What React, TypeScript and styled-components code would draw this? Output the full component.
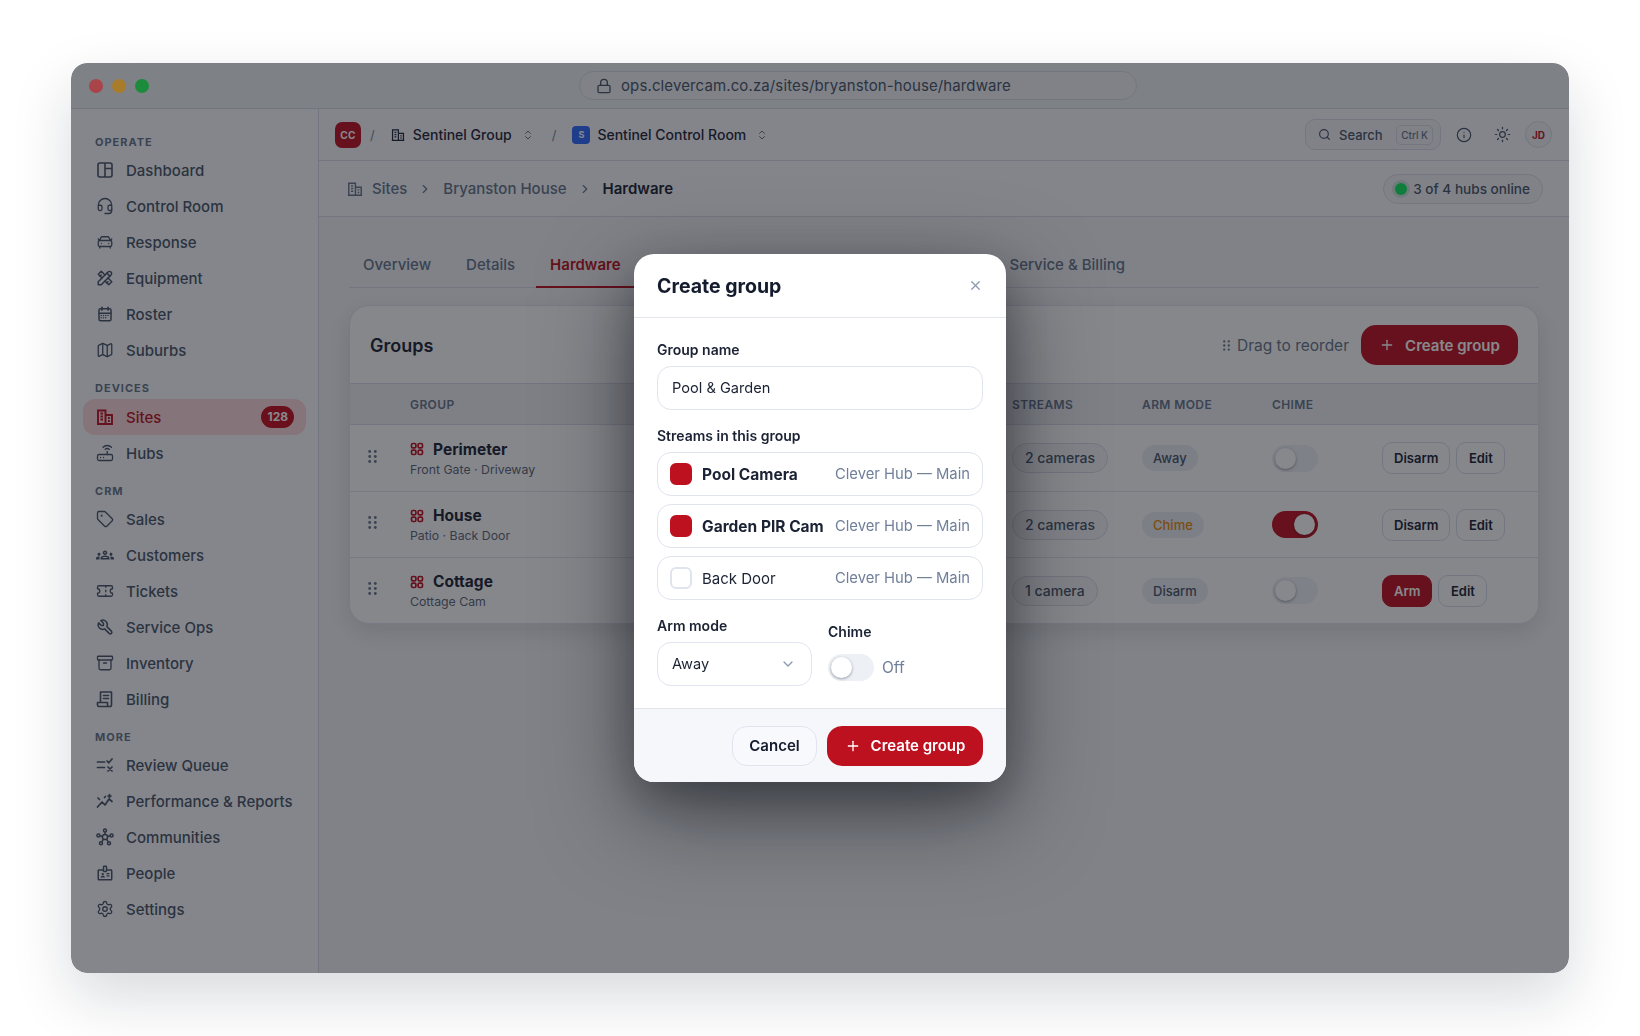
import React from 'react'
import styled, { createGlobalStyle } from 'styled-components'
import {
  Archive,
  CarFront,
  ChevronDown,
  ChevronRight,
  ChevronsUpDown,
  Headset,
  Info,
  Lock,
  Map as MapIcon,
  Plus,
  Router,
  Search,
  Settings,
  Sun,
  Tag,
  Ticket,
  X,
} from 'lucide-react'
import { TbCalendarMonth, TbTool, TbTools } from 'react-icons/tb'
import { MdOutlineBadge, MdOutlineGroups } from 'react-icons/md'

const FONT = `Inter, "Liberation Sans", sans-serif`

const GlobalStyle = createGlobalStyle`
  html, body {
    margin: 0;
    padding: 0;
    background: #ffffff;
    font-family: ${FONT};
  }
  * {
    box-sizing: border-box;
  }
`

const Page = styled.div`
  width: 1640px;
  height: 1036px;
  padding: 63px 71px 62px;
  overflow: hidden;
`

const BrowserWindow = styled.div`
  position: relative;
  width: 1498px;
  height: 910px;
  display: flex;
  flex-direction: column;
  border-radius: 16px;
  background: #f7f8fa;
  box-shadow: 0 24px 60px rgba(15, 23, 42, 0.16);
  overflow: hidden;
`

const TitleBar = styled.div`
  height: 46px;
  flex: none;
  display: flex;
  align-items: center;
  padding-left: 18px;
  background: #edf0f3;
  border-bottom: 1px solid #d5dbe6;
`

const Lights = styled.div`
  position: relative;
  z-index: 3;
  display: flex;
  gap: 9px;
`

const Light = styled.span<{ $color: string }>`
  width: 14px;
  height: 14px;
  border-radius: 50%;
  background: ${({ $color }) => $color};
`

const AddressBar = styled.div`
  width: 558px;
  height: 29px;
  margin-left: 430px;
  display: flex;
  align-items: center;
  gap: 9px;
  padding-left: 16px;
  border: 1px solid #d5dbe6;
  border-radius: 15px;
  background: #f0f2f6;
  color: #475569;
  font-size: 15px;
  letter-spacing: 0.12px;
`

const Body = styled.div`
  flex: 1;
  min-height: 0;
  display: flex;
`

const Sidebar = styled.aside`
  width: 248px;
  flex: none;
  padding: 25px 12px 0;
  background: #fafbfd;
  border-right: 1px solid #d5dbe6;
`

const NavLabel = styled.div<{ $top: number; $bottom: number }>`
  height: 16px;
  margin: ${({ $top }) => $top}px 0 ${({ $bottom }) => $bottom}px;
  padding-left: 12px;
  color: #64748b;
  font-size: 11px;
  font-weight: 700;
  line-height: 16px;
  letter-spacing: 1px;
`

const NavItem = styled.div<{ $active?: boolean }>`
  height: 36px;
  display: flex;
  align-items: center;
  gap: 12px;
  padding: 0 13px 0 13px;
  border-radius: 12px;
  background: ${({ $active }) => ($active ? '#fad6da' : 'transparent')};
  color: ${({ $active }) => ($active ? '#bd1120' : '#475569')};
  font-size: 15px;
  font-weight: 500;
  svg {
    flex: none;
    width: 18px;
    height: 18px;
  }
`

const NavBadge = styled.span`
  margin-left: auto;
  margin-right: -1px;
  padding: 0 6px;
  height: 22px;
  border-radius: 11px;
  background: #c50f20;
  color: #ffffff;
  font-size: 12px;
  font-weight: 700;
  line-height: 22px;
`

const Main = styled.main`
  flex: 1;
  min-width: 0;
  display: flex;
  flex-direction: column;
  background: #f1f3f5;
`

const TopBar = styled.div`
  height: 52px;
  flex: none;
  display: flex;
  align-items: center;
  padding: 0 17px 0 16px;
  background: #f7f8fa;
  border-bottom: 1px solid #d5dbe6;
`

const OrgLogo = styled.span`
  width: 26px;
  height: 26px;
  display: flex;
  align-items: center;
  justify-content: center;
  border-radius: 7px;
  background: #bd1120;
  color: #ffffff;
  font-size: 10px;
  font-weight: 700;
  letter-spacing: 0.3px;
`

const Slash = styled.span<{ $second?: boolean }>`
  margin: 0 16px 0 ${({ $second }) => ($second ? '18px' : '9px')};
  color: #7b879b;
  font-size: 13px;
`

const ProjectLogo = styled.span`
  width: 18px;
  height: 18px;
  margin-right: -1px;
  display: flex;
  align-items: center;
  justify-content: center;
  border-radius: 4px;
  background: #2d6aff;
  color: #ffffff;
  font-size: 9px;
  font-weight: 700;
`

const Switcher = styled.div`
  display: flex;
  align-items: center;
  gap: 8px;
  color: #1e2538;
  font-size: 14px;
  font-weight: 500;
  svg {
    flex: none;
  }
`

const SwitcherText = styled.span`
  margin-right: 2px;
`

const TopActions = styled.div`
  margin-left: auto;
  display: flex;
  align-items: center;
`

const SearchBox = styled.div`
  width: 136px;
  height: 31px;
  display: flex;
  align-items: center;
  padding: 0 7px 0 12px;
  border: 1px solid #d5dbe6;
  border-radius: 10px;
  background: #f1f3f7;
  color: #475569;
  font-size: 13px;
  font-weight: 500;
  gap: 8px;
`

const Kbd = styled.span`
  margin-left: auto;
  flex: none;
  height: 20px;
  padding: 0 4px;
  border: 1px solid #d5dbe6;
  border-radius: 5px;
  color: #64748b;
  font-size: 10px;
  font-weight: 500;
  line-height: 18px;
  white-space: nowrap;
`

const IconButton = styled.span<{ $first?: boolean }>`
  width: 38px;
  margin-left: ${({ $first }) => ($first ? '4px' : '0')};
  display: flex;
  justify-content: center;
  color: #475569;
`

const Avatar = styled.span`
  width: 27px;
  height: 27px;
  display: flex;
  align-items: center;
  justify-content: center;
  margin-left: 4px;
  border: 1px solid #d5dbe6;
  border-radius: 50%;
  background: #f1f3f7;
  color: #bd1120;
  font-size: 10px;
  font-weight: 700;
`

const Crumbs = styled.div`
  height: 56px;
  flex: none;
  display: flex;
  align-items: center;
  padding: 0 26px 0 28px;
  background: #f7f8fa;
  border-bottom: 1px solid #d5dbe6;
  color: #64748b;
  font-size: 15px;
  font-weight: 500;
  svg {
    flex: none;
  }
`

const CrumbIcon = styled.span`
  display: flex;
  margin-right: 9px;
`

const CrumbSep = styled.span`
  display: flex;
  margin: 0 11px;
`

const CrumbCurrent = styled.span`
  color: #1a2233;
  font-weight: 600;
`

const HubPill = styled.div`
  margin-left: auto;
  height: 30px;
  display: flex;
  align-items: center;
  gap: 6px;
  padding: 0 12px 0 11px;
  border: 1px solid #d5dbe6;
  border-radius: 15px;
  background: #f1f3f7;
  color: #475569;
  font-size: 13.6px;
  font-weight: 500;
`

const HubDot = styled.span`
  width: 12px;
  height: 12px;
  border-radius: 50%;
  background: #0fe85f;
  box-shadow: 0 0 0 3px #cfe5da;
`

const Content = styled.div`
  flex: 1;
  padding: 30px 30px 0;
`

const Tabs = styled.div`
  height: 41px;
  display: flex;
  gap: 7px;
  border-bottom: 1px solid #d5dbe6;
`

const Tab = styled.div<{ $active?: boolean; $offset?: number }>`
  height: 41px;
  margin-left: ${({ $offset }) => $offset ?? 0}px;
  padding: 0 14px 5px;
  display: flex;
  align-items: center;
  border-bottom: 2px solid ${({ $active }) => ($active ? '#bd1120' : 'transparent')};
  color: ${({ $active }) => ($active ? '#bd1120' : '#64748b')};
  font-size: 15px;
  font-weight: ${({ $active }) => ($active ? 600 : 500)};
`

const Card = styled.section`
  margin-top: 17px;
  width: 1190px;
  border: 1px solid #dfe3ec;
  border-radius: 20px;
  background: #fcfdfd;
  box-shadow: 0 8px 24px rgba(15, 23, 42, 0.12);
  overflow: hidden;
`

const CardHeader = styled.div`
  height: 77px;
  display: flex;
  align-items: center;
  padding: 1px 20px 0 20px;
`

const CardTitle = styled.h2`
  margin: 0;
  color: #1a2233;
  font-size: 18px;
  font-weight: 600;
`

const Hint = styled.div`
  margin-left: auto;
  display: flex;
  align-items: center;
  gap: 7px;
  color: #64748b;
  font-size: 15.5px;
`

const PrimaryButton = styled.button<{ $w: number }>`
  width: ${({ $w }) => $w}px;
  height: 40px;
  display: flex;
  align-items: center;
  justify-content: center;
  gap: 10px;
  border: none;
  border-radius: 15px;
  background: #bd1120;
  color: #ffffff;
  font-family: ${FONT};
  font-size: 15px;
  font-weight: 600;
`

const HeaderButton = styled(PrimaryButton)`
  margin-left: 12px;
`

const TableGrid = styled.div`
  display: grid;
  grid-template-columns: 60px 602px 130px 130px 110px 1fr;
  align-items: center;
`

const TableHead = styled(TableGrid)`
  height: 42px;
  background: #eceef2;
  border-top: 1px solid #d5dbe6;
  border-bottom: 1px solid #d5dbe6;
  color: #64748b;
  font-size: 12px;
  font-weight: 600;
  letter-spacing: 0.4px;
`

const TableRow = styled(TableGrid)`
  height: 66px;
  & + & {
    border-top: 1px solid #dfe3ec;
  }
`

const GripCell = styled.div`
  display: flex;
  padding: 0 0 4px 18px;
  color: #64748b;
`

const GroupName = styled.div`
  display: flex;
  align-items: center;
  gap: 9px;
  color: #1a2233;
  font-size: 15.5px;
  font-weight: 700;
  svg {
    color: #bd1120;
  }
`

const GroupStreams = styled.div`
  margin-top: 3px;
  color: #5b6579;
  font-size: 12.3px;
`

const CountPill = styled.span`
  display: inline-block;
  height: 30px;
  padding: 0 12px;
  border: 1px solid #d5dbe6;
  border-radius: 15px;
  background: #f4f5f8;
  color: #475569;
  font-size: 14px;
  font-weight: 500;
  line-height: 28px;
`

const ModePill = styled.span<{ $amber?: boolean }>`
  display: inline-block;
  height: 26px;
  padding: 0 11px;
  border-radius: 13px;
  background: #e9ecf2;
  color: ${({ $amber }) => ($amber ? '#e88a05' : '#475569')};
  font-size: 13px;
  font-weight: 500;
  line-height: 26px;
`

const Toggle = styled.span<{ $on?: boolean }>`
  position: relative;
  display: block;
  width: 46px;
  height: 27px;
  border-radius: 14px;
  background: ${({ $on }) => ($on ? '#bd1120' : '#edf0f5')};
  &::after {
    content: '';
    position: absolute;
    top: 3px;
    left: ${({ $on }) => ($on ? '22px' : '3px')};
    width: 21px;
    height: 21px;
    border-radius: 50%;
    background: #ffffff;
    box-shadow: 0 1px 3px rgba(15, 23, 42, 0.4);
  }
`

const Actions = styled.div`
  display: flex;
  gap: 6px;
`

const RowButton = styled.button<{ $primary?: boolean }>`
  height: 32px;
  min-width: 49px;
  padding: 0 11px;
  border: 1px solid ${({ $primary }) => ($primary ? '#bd1120' : '#d5dbe6')};
  border-radius: 10px;
  background: ${({ $primary }) => ($primary ? '#bd1120' : '#fcfdfd')};
  color: ${({ $primary }) => ($primary ? '#ffffff' : '#1a2233')};
  font-family: ${FONT};
  font-size: 13px;
  font-weight: 600;
`

const Overlay = styled.div`
  position: absolute;
  inset: 0;
  z-index: 2;
  display: flex;
  align-items: center;
  justify-content: center;
  background: rgba(15, 18, 25, 0.5);
  backdrop-filter: blur(0.5px);
`

const Modal = styled.div`
  width: 372px;
  height: 528px;
  display: flex;
  flex-direction: column;
  border-radius: 20px;
  background: #ffffff;
  box-shadow: 0 30px 90px rgba(5, 8, 15, 0.5), 0 16px 40px rgba(5, 8, 15, 0.22);
  overflow: hidden;
`

const ModalHeader = styled.div`
  height: 64px;
  flex: none;
  display: flex;
  align-items: center;
  justify-content: space-between;
  padding: 0 23px;
  border-bottom: 1px solid #e2e5ee;
  color: #8a9ab2;
`

const ModalTitle = styled.h3`
  margin: 0;
  color: #141b2d;
  font-size: 19.5px;
  font-weight: 700;
`

const ModalBody = styled.div`
  flex: 1;
  padding: 23px 23px 0;
`

const FieldLabel = styled.div`
  height: 18px;
  color: #1a2233;
  font-size: 14px;
  font-weight: 600;
  line-height: 18px;
`

const TextInput = styled.div`
  height: 44px;
  margin: 7px 0 17px;
  display: flex;
  align-items: center;
  padding: 0 14px;
  border: 1px solid #e0e4ee;
  border-radius: 14px;
  color: #1a2233;
  font-size: 14.6px;
`

const StreamList = styled.div`
  display: flex;
  flex-direction: column;
  gap: 8px;
  margin-top: 7px;
`

const StreamRow = styled.div`
  height: 44px;
  display: flex;
  align-items: center;
  padding: 0 12px;
  border: 1px solid #e0e4ee;
  border-radius: 14px;
`

const Check = styled.span<{ $on?: boolean }>`
  width: 22px;
  height: 22px;
  flex: none;
  margin-right: 10px;
  border: 2px solid ${({ $on }) => ($on ? '#bd1120' : '#e0e4ee')};
  border-radius: 6px;
  background: ${({ $on }) => ($on ? '#bd1120' : '#ffffff')};
`

const StreamName = styled.span<{ $on?: boolean }>`
  color: #1a2233;
  font-size: ${({ $on }) => ($on ? '15.5px' : '15px')};
  font-weight: ${({ $on }) => ($on ? 700 : 400)};
  white-space: nowrap;
`

const StreamHub = styled.span`
  margin-left: auto;
  color: #71809a;
  font-size: 14.8px;
  white-space: nowrap;
`

const OptionsGrid = styled.div`
  display: grid;
  grid-template-columns: 155px 1fr;
  column-gap: 16px;
  align-items: center;
  margin-top: 17px;
`

const SelectBox = styled.div`
  height: 44px;
  margin-top: 7px;
  display: flex;
  align-items: center;
  justify-content: space-between;
  padding: 0 15px 0 14px;
  border: 1px solid #e0e4ee;
  border-radius: 14px;
  color: #1a2233;
  font-size: 14.6px;
  svg {
    color: #8a9ab2;
  }
`

const ChimeRow = styled.div`
  display: flex;
  align-items: center;
  gap: 8px;
  margin-top: 13px;
  color: #71809a;
  font-size: 15.5px;
`

const ModalFooter = styled.div`
  height: 74px;
  flex: none;
  display: flex;
  align-items: center;
  justify-content: flex-end;
  gap: 10px;
  padding: 0 23px;
  background: #f6f7fb;
  border-top: 1px solid #e2e5ee;
`

const CancelButton = styled.button`
  width: 85px;
  height: 40px;
  border: 1px solid #e0e4ee;
  border-radius: 15px;
  background: #f8f9fc;
  color: #141b2d;
  font-family: ${FONT};
  font-size: 15px;
  font-weight: 600;
`

// panel icon for the dashboard entry
const PanelIcon = () => (
  <svg viewBox="0 0 18 18" fill="none" stroke="currentColor" strokeWidth="1.6">
    <rect x="2" y="2" width="14" height="14" rx="2" />
    <path d="M9 2v14M9 7.5h7" />
  </svg>
)

const QueueIcon = () => (
  <svg viewBox="0 0 18 18" fill="none" stroke="currentColor" strokeWidth="1.7" strokeLinecap="round" strokeLinejoin="round">
    <path d="M1.5 6h7M1.5 11.5h7M11 5l1.8 1.8L16 3M12 11l4 4M16 11l-4 4" />
  </svg>
)

const PerfIcon = () => (
  <svg viewBox="0 0 18 18" fill="none" stroke="currentColor" strokeWidth="1.7" strokeLinecap="round" strokeLinejoin="round">
    <path d="M1.5 15l4.5-5 3 3 4-6 3 2.5M2 6l1.5 1.5M8.5 5.5l1-1M13.5 2.5v3M12 4h3" />
  </svg>
)

const BillingIcon = () => (
  <svg viewBox="0 0 18 18" fill="none" stroke="currentColor" strokeWidth="1.6" strokeLinecap="round" strokeLinejoin="round">
    <path d="M4.5 12.5V2h11v13a1.5 1.5 0 0 1-1.5 1.5H3A1.5 1.5 0 0 1 1.5 15v-2.5h10V15a1.5 1.5 0 0 0 1.5 1.5" />
    <path d="M7.5 5.5h5M7.5 8.5h5" />
  </svg>
)

const CommunitiesIcon = () => (
  <svg viewBox="0 0 18 18" fill="none" stroke="currentColor" strokeWidth="1.5">
    <circle cx="9" cy="9" r="2.6" />
    <circle cx="9" cy="2.4" r="1.5" />
    <circle cx="2.4" cy="7.4" r="1.5" />
    <circle cx="15.6" cy="7.4" r="1.5" />
    <circle cx="5" cy="15.2" r="1.5" />
    <circle cx="13" cy="15.2" r="1.5" />
    <path d="M9 3.9v2.5M3.9 7.8l2.6.6M14.1 7.8l-2.6.6M5.8 13.9l1.7-2.8M12.2 13.9l-1.7-2.8" />
  </svg>
)

// tall block with windows and a lower wing, used for sites
const SitesIcon = ({ size, stroke = 1.6 }: { size?: number; stroke?: number }) => (
  <svg width={size} height={size} viewBox="0 0 18 18" fill="none" stroke="currentColor" strokeWidth={stroke}>
    <path d="M2 16V2.5h7.5V16M9.5 7H16v9M1 16h16" />
    <path d="M4.5 5.5h2.5M4.5 8.5h2.5M4.5 11.5h2.5M12 10h1.8M12 13h1.8" />
  </svg>
)

const GroupGlyph = () => (
  <svg width="14" height="14" viewBox="0 0 14 14" fill="none" stroke="currentColor" strokeWidth="1.7">
    <rect x="1.5" y="1.5" width="4.4" height="4.4" rx="1.4" />
    <rect x="8.1" y="1.5" width="4.4" height="4.4" rx="1.4" />
    <rect x="1.5" y="8.1" width="4.4" height="4.4" rx="1.4" />
    <rect x="8.1" y="8.1" width="4.4" height="4.4" rx="1.4" />
  </svg>
)

const Grip = ({ w, h, r }: { w: number; h: number; r: number }) => (
  <svg width={w} height={h} viewBox="0 0 8 12" fill="currentColor">
    {[1.4, 6.6].map((x) => [1.4, 6, 10.6].map((y) => <circle key={`${x}-${y}`} cx={x} cy={y} r={r} />))}
  </svg>
)

const NAV = [
  {
    label: 'OPERATE',
    top: 0,
    bottom: 2,
    items: [
      { name: 'Dashboard', icon: <PanelIcon /> },
      { name: 'Control Room', icon: <Headset strokeWidth={1.75} /> },
      { name: 'Response', icon: <CarFront strokeWidth={1.75} /> },
      { name: 'Equipment', icon: <TbTools /> },
      { name: 'Roster', icon: <TbCalendarMonth /> },
      { name: 'Suburbs', icon: <MapIcon strokeWidth={1.75} /> },
    ],
  },
  {
    label: 'DEVICES',
    top: 12,
    bottom: 3,
    items: [
      { name: 'Sites', icon: <SitesIcon stroke={1.9} />, active: true, badge: '128' },
      { name: 'Hubs', icon: <Router strokeWidth={1.75} /> },
    ],
  },
  {
    label: 'CRM',
    top: 12,
    bottom: 2,
    items: [
      { name: 'Sales', icon: <Tag strokeWidth={1.75} /> },
      { name: 'Customers', icon: <MdOutlineGroups /> },
      { name: 'Tickets', icon: <Ticket strokeWidth={1.75} /> },
      { name: 'Service Ops', icon: <TbTool /> },
      { name: 'Inventory', icon: <Archive strokeWidth={1.75} /> },
      { name: 'Billing', icon: <BillingIcon /> },
    ],
  },
  {
    label: 'MORE',
    top: 12,
    bottom: 2,
    items: [
      { name: 'Review Queue', icon: <QueueIcon /> },
      { name: 'Performance & Reports', icon: <PerfIcon /> },
      { name: 'Communities', icon: <CommunitiesIcon /> },
      { name: 'People', icon: <MdOutlineBadge /> },
      { name: 'Settings', icon: <Settings strokeWidth={1.75} /> },
    ],
  },
]

const GROUPS = [
  { name: 'Perimeter', streams: 'Front Gate · Driveway', count: '2 cameras', mode: 'Away', chime: false, action: 'Disarm' },
  { name: 'House', streams: 'Patio · Back Door', count: '2 cameras', mode: 'Chime', chime: true, action: 'Disarm' },
  { name: 'Cottage', streams: 'Cottage Cam', count: '1 camera', mode: 'Disarm', chime: false, action: 'Arm' },
]

const STREAMS = [
  { name: 'Pool Camera', on: true },
  { name: 'Garden PIR Cam', on: true },
  { name: 'Back Door', on: false },
]

export default function App() {
  return (
    <>
      <GlobalStyle />
      <Page>
        <BrowserWindow>
          <TitleBar>
            <Lights>
              <Light $color="#a8444a" />
              <Light $color="#a87c2a" />
              <Light $color="#1c8c3c" />
            </Lights>
            <AddressBar>
              <Lock size={16} strokeWidth={2} />
              ops.clevercam.co.za/sites/bryanston-house/hardware
            </AddressBar>
          </TitleBar>
          <Body>
            <Sidebar>
              {NAV.map((section) => (
                <React.Fragment key={section.label}>
                  <NavLabel $top={section.top} $bottom={section.bottom}>
                    {section.label}
                  </NavLabel>
                  {section.items.map((item: any) => (
                    <NavItem key={item.name} $active={item.active}>
                      {item.icon}
                      {item.name}
                      {item.badge && <NavBadge>{item.badge}</NavBadge>}
                    </NavItem>
                  ))}
                </React.Fragment>
              ))}
            </Sidebar>
            <Main>
              <TopBar>
                <OrgLogo>CC</OrgLogo>
                <Slash>/</Slash>
                <Switcher>
                  <SitesIcon size={14} />
                  <SwitcherText>Sentinel Group</SwitcherText>
                  <ChevronsUpDown size={12} color="#64748b" />
                </Switcher>
                <Slash $second>/</Slash>
                <Switcher>
                  <ProjectLogo>S</ProjectLogo>
                  <SwitcherText>Sentinel Control Room</SwitcherText>
                  <ChevronsUpDown size={12} color="#64748b" />
                </Switcher>
                <TopActions>
                  <SearchBox>
                    <Search size={13} strokeWidth={2.2} />
                    Search
                    <Kbd>Ctrl K</Kbd>
                  </SearchBox>
                  <IconButton $first>
                    <Info size={16} strokeWidth={1.75} />
                  </IconButton>
                  <IconButton>
                    <Sun size={17} strokeWidth={1.75} />
                  </IconButton>
                  <Avatar>JD</Avatar>
                </TopActions>
              </TopBar>
              <Crumbs>
                <CrumbIcon>
                  <SitesIcon size={16} />
                </CrumbIcon>
                Sites
                <CrumbSep>
                  <ChevronRight size={14} />
                </CrumbSep>
                Bryanston House
                <CrumbSep>
                  <ChevronRight size={14} />
                </CrumbSep>
                <CrumbCurrent>Hardware</CrumbCurrent>
                <HubPill>
                  <HubDot />
                  3 of 4 hubs online
                </HubPill>
              </Crumbs>
              <Content>
                <Tabs>
                  <Tab>Overview</Tab>
                  <Tab>Details</Tab>
                  <Tab $active>Hardware</Tab>
                  <Tab $offset={354}>Service &amp; Billing</Tab>
                </Tabs>
                <Card>
                  <CardHeader>
                    <CardTitle>Groups</CardTitle>
                    <Hint>
                      <Grip w={7} h={11} r={1.3} />
                      Drag to reorder
                    </Hint>
                    <HeaderButton $w={157}>
                      <Plus size={16} />
                      Create group
                    </HeaderButton>
                  </CardHeader>
                  <TableHead>
                    <span />
                    <span>GROUP</span>
                    <span>STREAMS</span>
                    <span>ARM MODE</span>
                    <span>CHIME</span>
                    <span />
                  </TableHead>
                  {GROUPS.map((group) => (
                    <TableRow key={group.name}>
                      <GripCell>
                        <Grip w={9} h={13} r={1.3} />
                      </GripCell>
                      <div>
                        <GroupName>
                          <GroupGlyph />
                          {group.name}
                        </GroupName>
                        <GroupStreams>{group.streams}</GroupStreams>
                      </div>
                      <div>
                        <CountPill>{group.count}</CountPill>
                      </div>
                      <div>
                        <ModePill $amber={group.mode === 'Chime'}>{group.mode}</ModePill>
                      </div>
                      <div>
                        <Toggle $on={group.chime} />
                      </div>
                      <Actions>
                        <RowButton $primary={group.action === 'Arm'}>{group.action}</RowButton>
                        <RowButton>Edit</RowButton>
                      </Actions>
                    </TableRow>
                  ))}
                </Card>
              </Content>
            </Main>
          </Body>
          <Overlay>
            <Modal>
              <ModalHeader>
                <ModalTitle>Create group</ModalTitle>
                <X size={15} />
              </ModalHeader>
              <ModalBody>
                <FieldLabel>Group name</FieldLabel>
                <TextInput>Pool &amp; Garden</TextInput>
                <FieldLabel>Streams in this group</FieldLabel>
                <StreamList>
                  {STREAMS.map((stream) => (
                    <StreamRow key={stream.name}>
                      <Check $on={stream.on} />
                      <StreamName $on={stream.on}>{stream.name}</StreamName>
                      <StreamHub>Clever Hub — Main</StreamHub>
                    </StreamRow>
                  ))}
                </StreamList>
                <OptionsGrid>
                  <div>
                    <FieldLabel>Arm mode</FieldLabel>
                    <SelectBox>
                      Away
                      <ChevronDown size={16} />
                    </SelectBox>
                  </div>
                  <div>
                    <FieldLabel>Chime</FieldLabel>
                    <ChimeRow>
                      <Toggle />
                      Off
                    </ChimeRow>
                  </div>
                </OptionsGrid>
              </ModalBody>
              <ModalFooter>
                <CancelButton>Cancel</CancelButton>
                <PrimaryButton $w={156}>
                  <Plus size={16} />
                  Create group
                </PrimaryButton>
              </ModalFooter>
            </Modal>
          </Overlay>
        </BrowserWindow>
      </Page>
    </>
  )
}
